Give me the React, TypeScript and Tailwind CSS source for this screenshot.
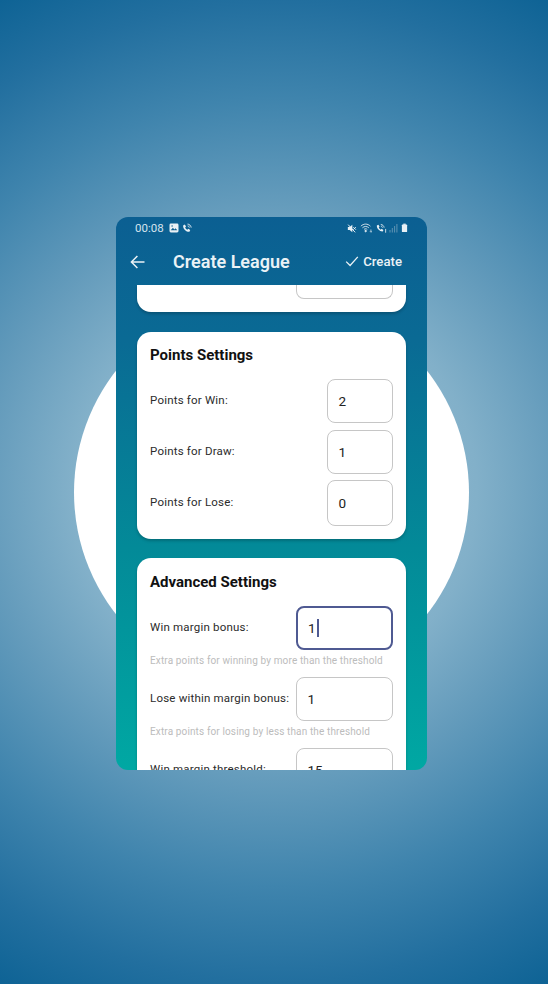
const font = "font-['Roboto','Liberation_Sans',sans-serif]";

function StatusBar() {
  return (
    <div className="flex h-[21px] shrink-0 items-center justify-between pl-[19px] pr-[19px] pt-[1px] text-[#d5e4ee]">
      <div className="flex items-center">
        <span className="text-[11.5px] leading-[14px]">00:08</span>
        {/* Gallery */}
        <svg width="10" height="10" viewBox="0 0 10 10" className="ml-[5px]">
          <rect x="0.5" y="0.5" width="9" height="9" rx="1.4" fill="#e8f0f5" />
          <path d="M1.7 7.2l2.2-2.4 1.5 1.6 1.1-1.1 1.8 1.9z" fill="#0f5f90" />
          <circle cx="3.1" cy="3" r="0.7" fill="#0f5f90" />
        </svg>
        {/* Wifi call */}
        <svg width="11" height="11" viewBox="0 0 12 12" fill="none" className="ml-[3px]">
          <path d="M1.2 2.6l1.9-1 1.3 2.3-1 .9c.5 1.2 1.4 2.1 2.5 2.6l.9-1 2.2 1.3-.9 1.9C4.6 9.8 1 6.3 1.2 2.6z" fill="#e8f0f5" />
          <path d="M6 1.2c1.9 0 3.8 1.6 4 3.8M6.2 3.2c.9 0 1.7.7 1.8 1.8" stroke="#e8f0f5" strokeWidth="1" />
        </svg>
      </div>
      <div className="flex items-center">
        {/* Mute */}
        <svg width="10" height="11" viewBox="0 0 12 12" fill="none">
          <path d="M1 4.2h2.2L6.4 1.6v8.8L3.2 7.8H1z" fill="#e8f0f5" />
          <path d="M7.6 4.4l3 3M10.6 4.4l-3 3M1.4 1.4l8.4 9.2" stroke="#e8f0f5" strokeWidth="1.2" />
        </svg>
        {/* Wifi */}
        <svg width="13" height="12" viewBox="0 0 15 13" fill="none" stroke="#e8f0f5" strokeWidth="1" className="ml-[3px]">
          <path d="M1 4.4C4.2 1.2 8.8 1.2 12 4.4" />
          <path d="M2.8 6.3C5 4.2 8 4.2 10.2 6.3" />
          <path d="M4.6 8.2C5.8 7.1 7.2 7.1 8.4 8.2" />
          <circle cx="6.5" cy="10" r="0.9" fill="#e8f0f5" />
          <path d="M12.6 8.2v3.2M11.6 10.4l1 1 1-1" strokeWidth="0.8" />
        </svg>
        {/* Call signal */}
        <svg width="11" height="11" viewBox="0 0 13 12" fill="none" className="ml-[3px]">
          <path d="M1 2.6l1.9-1 1.3 2.3-1 .9c.5 1.2 1.4 2.1 2.5 2.6l.9-1 2.2 1.3-.9 1.9C4.4 9.8.8 6.3 1 2.6z" fill="#e8f0f5" />
          <path d="M5.6 1.2c1.9 0 3.8 1.6 4 3.8M5.8 3.2c.9 0 1.7.7 1.8 1.8" stroke="#e8f0f5" strokeWidth="1" />
          <path d="M11.4 6.5v4.5" stroke="#e8f0f5" strokeWidth="1" />
        </svg>
        {/* Signal bars */}
        <svg width="9" height="10" viewBox="0 0 9 10" className="ml-[2px]">
          <rect x="0.5" y="7" width="1" height="2.5" fill="#5f93b3" />
          <rect x="2.8" y="5" width="1" height="4.5" fill="#5f93b3" />
          <rect x="5.1" y="3" width="1" height="6.5" fill="#5f93b3" />
          <rect x="7.4" y="1" width="1" height="8.5" fill="#5f93b3" />
        </svg>
        {/* Battery */}
        <svg width="7" height="10" viewBox="0 0 8 11" className="ml-[3px]">
          <rect x="2.6" y="0.5" width="2.8" height="1.4" fill="#e8f0f5" />
          <rect x="1" y="1.6" width="6" height="8.6" rx="0.8" fill="#e8f0f5" />
        </svg>
      </div>
    </div>
  );
}

function AppBar() {
  return (
    <div className="flex h-[47px] shrink-0 items-center pl-[14px] pr-[25px] text-[#eaf2f6]">
      <svg width="15" height="14" viewBox="0 0 15 14" fill="none" stroke="currentColor" strokeWidth="1.5">
        <path d="M14.5 7H1.5M7.4 1L1.4 7l6 6" />
      </svg>
      <span className="ml-[28px] text-[18px] font-semibold">Create League</span>
      <div className="ml-auto flex items-center gap-[4px] pt-[1px]">
        <svg width="14" height="11" viewBox="0 0 14 11" fill="none" stroke="currentColor" strokeWidth="1.3">
          <path d="M1.2 5.6l3.9 3.9 7.7-8.6" />
        </svg>
        <span className="text-[13.2px] font-medium">Create</span>
      </div>
    </div>
  );
}

function Field({ label, value, wide, tall, tight, focused }: { label: string; value: string; wide?: boolean; tall?: boolean; tight?: boolean; focused?: boolean }) {
  return (
    <div className={`flex items-center justify-between ${tight ? "-mt-[1px]" : ""}`}>
      <span className="whitespace-nowrap text-[11.5px] tracking-[0.2px] text-[#2b2b2b]">{label}</span>
      <div
        className={`flex items-center rounded-[8px] bg-white text-[13.5px] text-[#222] ${wide ? "w-[97px]" : "w-[66px]"} ${focused ? "border-2 border-[#4f5a92] pl-[10px]" : "border-[1.5px] border-[#c6c6c6] pl-[10.5px]"} ${tall ? "h-[46px]" : "h-[44px]"}`}
      >
        {value}
        {focused && <span className="ml-[1px] h-[18px] w-[2px] bg-[#4f5a92]" />}
      </div>
    </div>
  );
}

function Hint({ children }: { children: string }) {
  return <p className="mb-[10px] mt-[5px] whitespace-nowrap text-[10px] leading-[12px] tracking-[0.13px] text-[#bcbcbc]">{children}</p>;
}

export default function App() {
  return (
    <div className={`relative flex h-[984px] w-[548px] items-start justify-center overflow-hidden bg-[radial-gradient(circle_at_50%_50%,#a3c6d9_0%,#82b0c9_36%,#659cbc_51%,#3f84ad_70%,#226f9f_87%,#0e6395_100%)] pt-[217px] ${font}`}>
      {/* White circle behind the phone */}
      <div className="absolute left-[74px] top-[295px] h-[395px] w-[395px] rounded-full bg-white" />

      <div className="relative mr-[5px] flex h-[553px] w-[311px] flex-col overflow-hidden rounded-[12px] bg-[linear-gradient(180deg,#0b5f92_0%,#0a6a94_22%,#038a98_60%,#00a8a3_100%)]">
        <StatusBar />
        <AppBar />
        <div className="flex flex-col overflow-hidden px-[21px]">
          {/* Previous card, scrolled off */}
          <div className="mb-[20px] flex h-[27px] shrink-0 justify-end rounded-b-[14px] bg-white pr-[13px] shadow-[0_2px_3px_rgba(0,0,0,0.2)]">
            <div className="h-[14px] w-[97px] rounded-b-[8px] border-[1.5px] border-t-0 border-[#c6c6c6]" />
          </div>

          <div className="mb-[19px] shrink-0 rounded-[14px] bg-white px-[13px] pb-[13px] pt-[14px] shadow-[0_2px_3px_rgba(0,0,0,0.2)]">
            <h2 className="mb-[15px] text-[15px] font-bold leading-[18px] text-[#111]">Points Settings</h2>
            <div className="flex flex-col gap-[7px]">
              <Field label="Points for Win:" value="2" />
              <Field label="Points for Draw:" value="1" />
              <Field label="Points for Lose:" value="0" tall tight />
            </div>
          </div>

          <div className="shrink-0 rounded-[14px] bg-white px-[13px] pb-[13px] pt-[15px] shadow-[0_2px_3px_rgba(0,0,0,0.2)]">
            <h2 className="mb-[15px] text-[15px] font-bold leading-[18px] text-[#111]">Advanced Settings</h2>
            <Field label="Win margin bonus:" value="1" wide focused />
            <Hint>Extra points for winning by more than the threshold</Hint>
            <Field label="Lose within margin bonus:" value="1" wide />
            <Hint>Extra points for losing by less than the threshold</Hint>
            <Field label="Win margin threshold:" value="15" wide />
          </div>
        </div>
      </div>
    </div>
  );
}
